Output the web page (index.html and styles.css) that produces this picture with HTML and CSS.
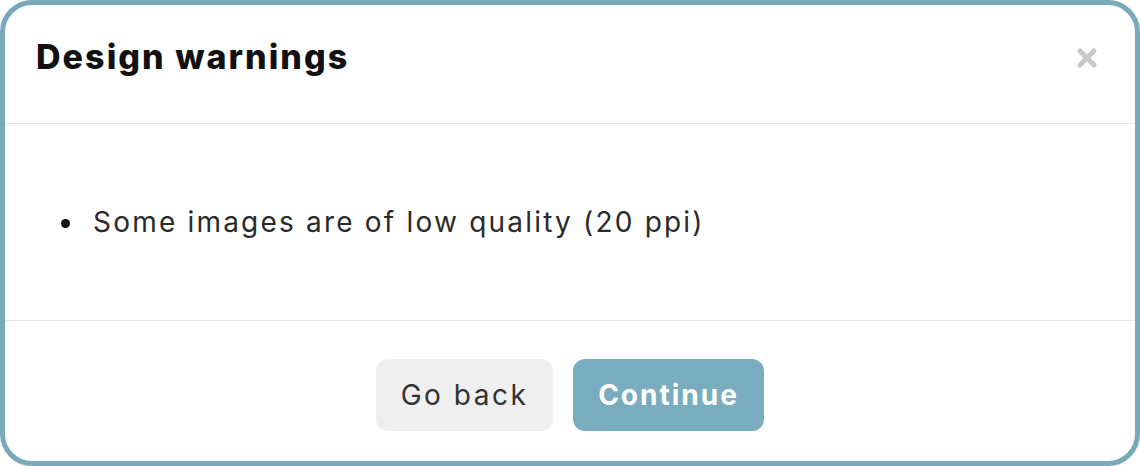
FILE: index.html
```html
<!DOCTYPE html>
<html>

<head>
  <meta charset="utf-8" />
  <title>Design warnings</title>
  <link rel="stylesheet" href="styles.css">
</head>

<body>
  <div class="modal">
    <div class="modal-header">
      <h2>Design warnings</h2>
      <span class="close">
        <svg width="22" height="22" viewBox="0 0 22 22">
          <path d="M4 4L18 18M18 4L4 18" stroke="#c9c9c9" stroke-width="5" stroke-linecap="round" />
        </svg>
      </span>
    </div>
    <div class="modal-body">
      <ul>
        <li>Some images are of low quality (20 ppi)</li>
      </ul>
    </div>
    <div class="modal-footer">
      <button class="btn btn-back">Go back</button>
      <button class="btn btn-continue">Continue</button>
    </div>
  </div>
</body>

</html>
```

FILE: styles.css
```css
* {
  box-sizing: border-box;
}

body {
  margin: 0;
  background: #fff;
  font-family: Inter, "Open Sans", sans-serif;
}

.modal {
  width: 1140px;
  height: 466px;
  border: 5px solid #78aabb;
  border-radius: 32px;
  background: #fff;
  display: flex;
  flex-direction: column;
  overflow: hidden;
}

.modal-header {
  height: 119px;
  border-bottom: 1px solid #e6e6e6;
  display: flex;
  align-items: center;
  justify-content: space-between;
  padding: 0 37px 16px 31px;
}

.modal-header h2 {
  margin: 0;
  font-size: 34px;
  font-weight: 800;
  color: #111;
  letter-spacing: 2.05px;
}

.close {
  display: flex;
  margin-top: 3px;
}

.modal-body {
  height: 197px;
  border-bottom: 1px solid #e6e6e6;
  display: flex;
  align-items: center;
}

.modal-body ul {
  margin: 0;
  padding: 0 0 0 56px;
  list-style: none;
}

.modal-body li {
  display: flex;
  align-items: center;
  gap: 23px;
  font-size: 28px;
  letter-spacing: 2.2px;
  color: #2a2a2a;
}

.modal-body li::before {
  content: "";
  width: 9px;
  height: 9px;
  border-radius: 50%;
  background: #111;
  margin-top: 2px;
}

.modal-footer {
  flex: 1;
  display: flex;
  justify-content: center;
  gap: 20px;
  padding-top: 38px;
}

.btn {
  height: 72px;
  border: 0;
  border-radius: 12px;
  font-family: Inter, "Open Sans", sans-serif;
  font-size: 28px;
  padding: 0;
}

.btn-back {
  width: 177px;
  background: #efefef;
  color: #333;
  letter-spacing: 2.5px;
}

.btn-continue {
  width: 191px;
  background: #78acbe;
  color: #fff;
  font-weight: 700;
  letter-spacing: 2px;
}
```
